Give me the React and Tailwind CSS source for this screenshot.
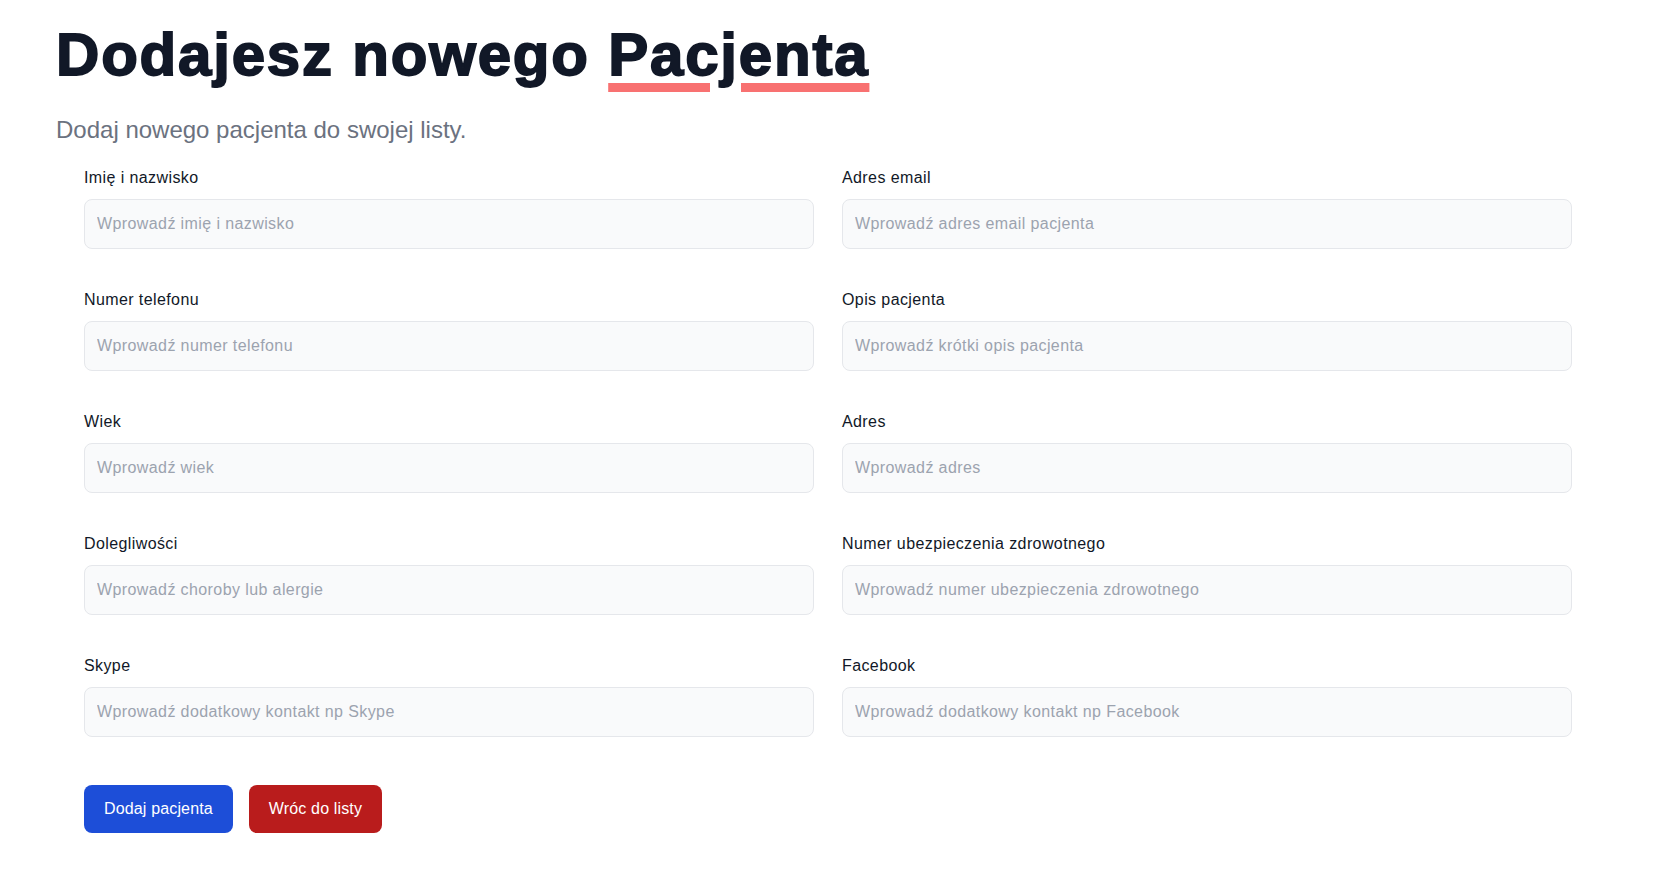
import React from 'react';

const fields = [
  { label: 'Imię i nazwisko', placeholder: 'Wprowadź imię i nazwisko' },
  { label: 'Adres email', placeholder: 'Wprowadź adres email pacjenta' },
  { label: 'Numer telefonu', placeholder: 'Wprowadź numer telefonu' },
  { label: 'Opis pacjenta', placeholder: 'Wprowadź krótki opis pacjenta' },
  { label: 'Wiek', placeholder: 'Wprowadź wiek' },
  { label: 'Adres', placeholder: 'Wprowadź adres' },
  { label: 'Dolegliwości', placeholder: 'Wprowadź choroby lub alergie' },
  { label: 'Numer ubezpieczenia zdrowotnego', placeholder: 'Wprowadź numer ubezpieczenia zdrowotnego' },
  { label: 'Skype', placeholder: 'Wprowadź dodatkowy kontakt np Skype' },
  { label: 'Facebook', placeholder: 'Wprowadź dodatkowy kontakt np Facebook' },
];

const App = () => {
  return (
    <div className="min-h-screen bg-white px-14 pt-[25px] font-['Liberation_Sans',Arial,sans-serif]">
      <h1 className="text-6xl leading-[60px] font-black tracking-[1.8px] text-[#111827] [-webkit-text-stroke:1.8px_#111827]">
        Dodajesz nowego{' '}
        <span className="underline decoration-[#f87171] decoration-[9px] underline-offset-8">Pacjenta</span>
      </h1>
      <p className="mt-[29px] text-2xl text-[#6b7280]">Dodaj nowego pacjenta do swojej listy.</p>

      <form className="mt-5 pl-7 pr-[34px]" onSubmit={e => e.preventDefault()}>
        <div className="grid grid-cols-2 gap-x-7 gap-y-[39px]">
          {fields.map(f => (
            <div key={f.label}>
              <label className="mb-[9px] block text-base tracking-[0.4px] text-[#111827]">{f.label}</label>
              <input
                type="text"
                placeholder={f.placeholder}
                className="block w-full rounded-lg border border-[#e5e7eb] bg-[#f9fafb] px-3 py-3 text-base tracking-[0.4px] text-[#111827] placeholder:text-[#9ca3af] outline-none"
              />
            </div>
          ))}
        </div>

        <div className="mt-[48px] flex gap-4">
          <button type="submit" className="rounded-lg bg-[#1d4ed8] px-5 py-3 text-base tracking-[0.15px] text-white">
            Dodaj pacjenta
          </button>
          <button type="button" className="rounded-lg bg-[#b91c1c] px-5 py-3 text-base tracking-[0.15px] text-white">
            Wróc do listy
          </button>
        </div>
      </form>
    </div>
  );
};

export default App;
